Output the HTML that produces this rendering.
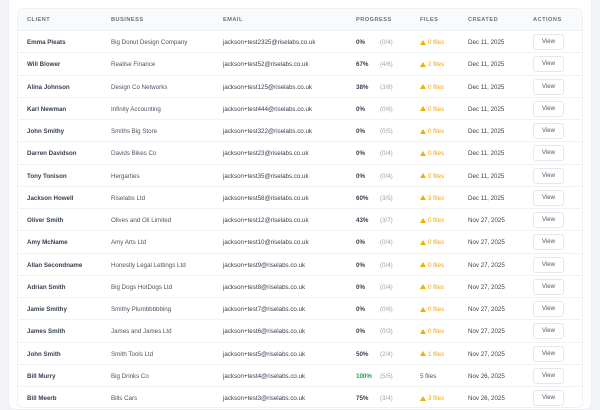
<!DOCTYPE html><html><head><style>
*{margin:0;padding:0;box-sizing:border-box}
body{width:600px;height:400px;overflow:hidden;background:#f3f4f7;font-family:"Liberation Sans",sans-serif;color:#374151}
.panel{position:absolute;left:8px;top:-10px;width:584px;height:420px;background:#fff;border-radius:8px;border:1px solid #eceef1}
.tbl{position:absolute;left:17px;top:8px;width:566px;height:400px;border:1px solid #eef0f3;border-radius:6px;overflow:hidden}
.hd{height:22px;background:#f9fafb;border-bottom:1px solid #eef0f3;position:relative}
.hd span{position:absolute;top:8px;font-size:5.6px;font-weight:bold;letter-spacing:.5px;color:#6b7280}
.r{height:22.25px;border-bottom:1px solid #f1f2f4;position:relative;font-size:6.2px}
.r span{position:absolute;top:8px;white-space:nowrap}
.c1{left:9px;font-weight:bold;color:#374151}
.c2{left:93px;color:#4b5563}
.c3{left:205px;color:#374151}
.c4{left:338px;font-weight:bold;color:#374151}
.c5{left:362px;color:#9ca3af}
.c6{left:402px;color:#f0a500}
.c6 i{display:inline-block;width:0;height:0;border-left:3px solid transparent;border-right:3px solid transparent;border-bottom:5.5px solid #eab308;margin-right:2px;vertical-align:-0.5px}
.c7{left:450px;color:#374151}
.btn{position:absolute;left:515px;top:3px;width:31px;height:16px;border:1px solid #e5e7eb;border-radius:3px;font-size:6px;text-align:center;line-height:14px;color:#4b5563;background:#fff}
.hd .h1{left:9px}.hd .h2{left:93px}.hd .h3{left:205px}.hd .h4{left:338px}.hd .h6{left:402px}.hd .h7{left:450px}.hd .h8{left:515px}
</style></head><body>
<div class="panel"></div>
<div class="tbl">
<div class="hd"><span class="h1">CLIENT</span><span class="h2">BUSINESS</span><span class="h3">EMAIL</span><span class="h4">PROGRESS</span><span class="h6">FILES</span><span class="h7">CREATED</span><span class="h8">ACTIONS</span></div>
<div class="r"><span class="c1">Emma Pleats</span><span class="c2">Big Donut Design Company</span><span class="c3">jackson+test2325@riselabs.co.uk</span><span class="c4">0%</span><span class="c5">(0/4)</span><span class="c6"><i></i>0 files</span><span class="c7">Dec 11, 2025</span><div class="btn">View</div></div>
<div class="r"><span class="c1">Will Blower</span><span class="c2">Realise Finance</span><span class="c3">jackson+test52@riselabs.co.uk</span><span class="c4">67%</span><span class="c5">(4/6)</span><span class="c6"><i></i>2 files</span><span class="c7">Dec 11, 2025</span><div class="btn">View</div></div>
<div class="r"><span class="c1">Alina Johnson</span><span class="c2">Design Co Networks</span><span class="c3">jackson+test125@riselabs.co.uk</span><span class="c4">38%</span><span class="c5">(3/8)</span><span class="c6"><i></i>0 files</span><span class="c7">Dec 11, 2025</span><div class="btn">View</div></div>
<div class="r"><span class="c1">Karl Newman</span><span class="c2">Infinity Accounting</span><span class="c3">jackson+test444@riselabs.co.uk</span><span class="c4">0%</span><span class="c5">(0/6)</span><span class="c6"><i></i>0 files</span><span class="c7">Dec 11, 2025</span><div class="btn">View</div></div>
<div class="r"><span class="c1">John Smithy</span><span class="c2">Smiths Big Store</span><span class="c3">jackson+test322@riselabs.co.uk</span><span class="c4">0%</span><span class="c5">(0/5)</span><span class="c6"><i></i>0 files</span><span class="c7">Dec 11, 2025</span><div class="btn">View</div></div>
<div class="r"><span class="c1">Darren Davidson</span><span class="c2">Davids Bikes Co</span><span class="c3">jackson+test23@riselabs.co.uk</span><span class="c4">0%</span><span class="c5">(0/4)</span><span class="c6"><i></i>0 files</span><span class="c7">Dec 11, 2025</span><div class="btn">View</div></div>
<div class="r"><span class="c1">Tony Tonison</span><span class="c2">Hergarties</span><span class="c3">jackson+test35@riselabs.co.uk</span><span class="c4">0%</span><span class="c5">(0/4)</span><span class="c6"><i></i>0 files</span><span class="c7">Dec 11, 2025</span><div class="btn">View</div></div>
<div class="r"><span class="c1">Jackson Howell</span><span class="c2">Riselabs Ltd</span><span class="c3">jackson+test58@riselabs.co.uk</span><span class="c4">60%</span><span class="c5">(3/5)</span><span class="c6"><i></i>3 files</span><span class="c7">Dec 11, 2025</span><div class="btn">View</div></div>
<div class="r"><span class="c1">Oliver Smith</span><span class="c2">Olives and Oil Limited</span><span class="c3">jackson+test12@riselabs.co.uk</span><span class="c4">43%</span><span class="c5">(3/7)</span><span class="c6"><i></i>0 files</span><span class="c7">Nov 27, 2025</span><div class="btn">View</div></div>
<div class="r"><span class="c1">Amy McName</span><span class="c2">Amy Arts Ltd</span><span class="c3">jackson+test10@riselabs.co.uk</span><span class="c4">0%</span><span class="c5">(0/4)</span><span class="c6"><i></i>0 files</span><span class="c7">Nov 27, 2025</span><div class="btn">View</div></div>
<div class="r"><span class="c1">Allan Secondname</span><span class="c2">Honestly Legal Lettings Ltd</span><span class="c3">jackson+test9@riselabs.co.uk</span><span class="c4">0%</span><span class="c5">(0/4)</span><span class="c6"><i></i>0 files</span><span class="c7">Nov 27, 2025</span><div class="btn">View</div></div>
<div class="r"><span class="c1">Adrian Smith</span><span class="c2">Big Dogs HotDogs Ltd</span><span class="c3">jackson+test8@riselabs.co.uk</span><span class="c4">0%</span><span class="c5">(0/4)</span><span class="c6"><i></i>0 files</span><span class="c7">Nov 27, 2025</span><div class="btn">View</div></div>
<div class="r"><span class="c1">Jamie Smithy</span><span class="c2">Smithy Plumbbbbbing</span><span class="c3">jackson+test7@riselabs.co.uk</span><span class="c4">0%</span><span class="c5">(0/6)</span><span class="c6"><i></i>0 files</span><span class="c7">Nov 27, 2025</span><div class="btn">View</div></div>
<div class="r"><span class="c1">James Smith</span><span class="c2">James and James Ltd</span><span class="c3">jackson+test6@riselabs.co.uk</span><span class="c4">0%</span><span class="c5">(0/3)</span><span class="c6"><i></i>0 files</span><span class="c7">Nov 27, 2025</span><div class="btn">View</div></div>
<div class="r"><span class="c1">John Smith</span><span class="c2">Smith Tools Ltd</span><span class="c3">jackson+test5@riselabs.co.uk</span><span class="c4">50%</span><span class="c5">(2/4)</span><span class="c6"><i></i>1 files</span><span class="c7">Nov 27, 2025</span><div class="btn">View</div></div>
<div class="r"><span class="c1">Bill Murry</span><span class="c2">Big Drinks Co</span><span class="c3">jackson+test4@riselabs.co.uk</span><span class="c4" style="color:#16a34a">100%</span><span class="c5">(5/5)</span><span class="c6" style="color:#4b5563">5 files</span><span class="c7">Nov 26, 2025</span><div class="btn">View</div></div>
<div class="r"><span class="c1">Bill Meerb</span><span class="c2">Bills Cars</span><span class="c3">jackson+test3@riselabs.co.uk</span><span class="c4">75%</span><span class="c5">(3/4)</span><span class="c6"><i></i>3 files</span><span class="c7">Nov 26, 2025</span><div class="btn">View</div></div>
</div>
</body></html>
